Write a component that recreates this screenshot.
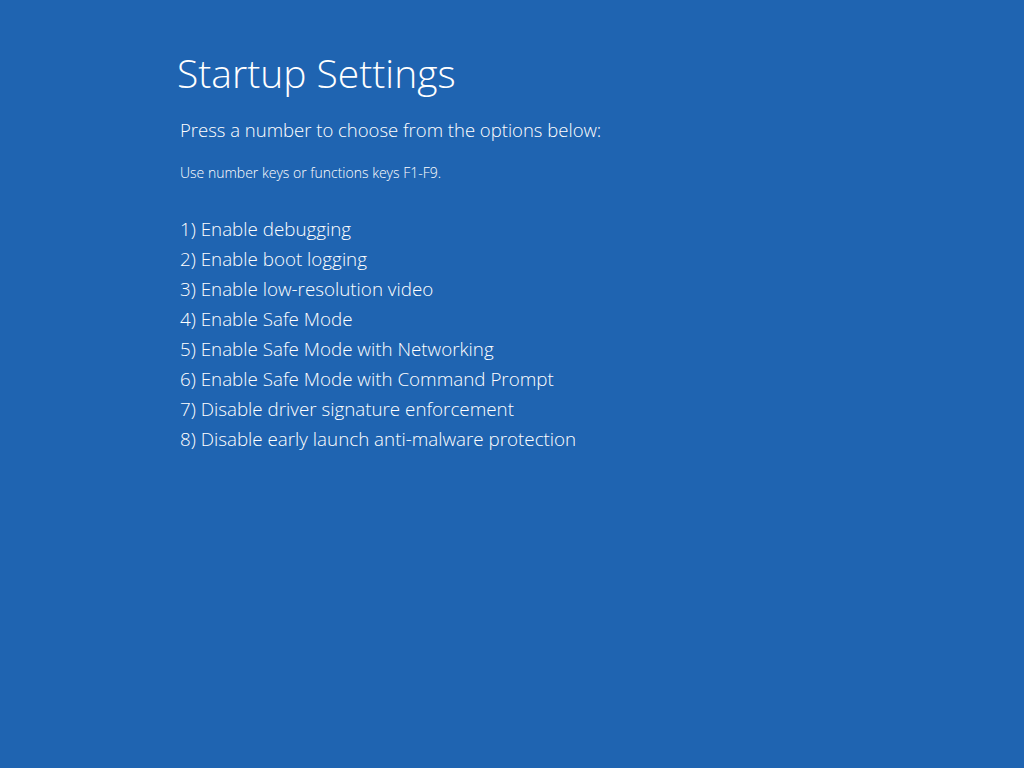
const options = [
  "1) Enable debugging",
  "2) Enable boot logging",
  "3) Enable low-resolution video",
  "4) Enable Safe Mode",
  "5) Enable Safe Mode with Networking",
  "6) Enable Safe Mode with Command Prompt",
  "7) Disable driver signature enforcement",
  "8) Disable early launch anti-malware protection",
];

export default function App() {
  return (
    <div className="h-[768px] w-[1024px] bg-[#1f64b1] text-white font-['Open_Sans',sans-serif] font-light">
      <div className="pl-[177px] pt-[49px]">
        <h1 className="text-[39px] leading-[48px]">Startup Settings</h1>
        <p className="mt-[19px] pl-[3px] text-[18.5px] leading-[28px]">
          Press a number to choose from the options below:
        </p>
        <p className="mt-[19px] pl-[3px] text-[14px] leading-[20px]">
          Use number keys or functions keys F1-F9.
        </p>
        <ul className="mt-[31px] pl-[3px]">
          {options.map((o) => (
            <li key={o} className="text-[18.8px] leading-[30px]">
              {o}
            </li>
          ))}
        </ul>
      </div>
    </div>
  );
}
